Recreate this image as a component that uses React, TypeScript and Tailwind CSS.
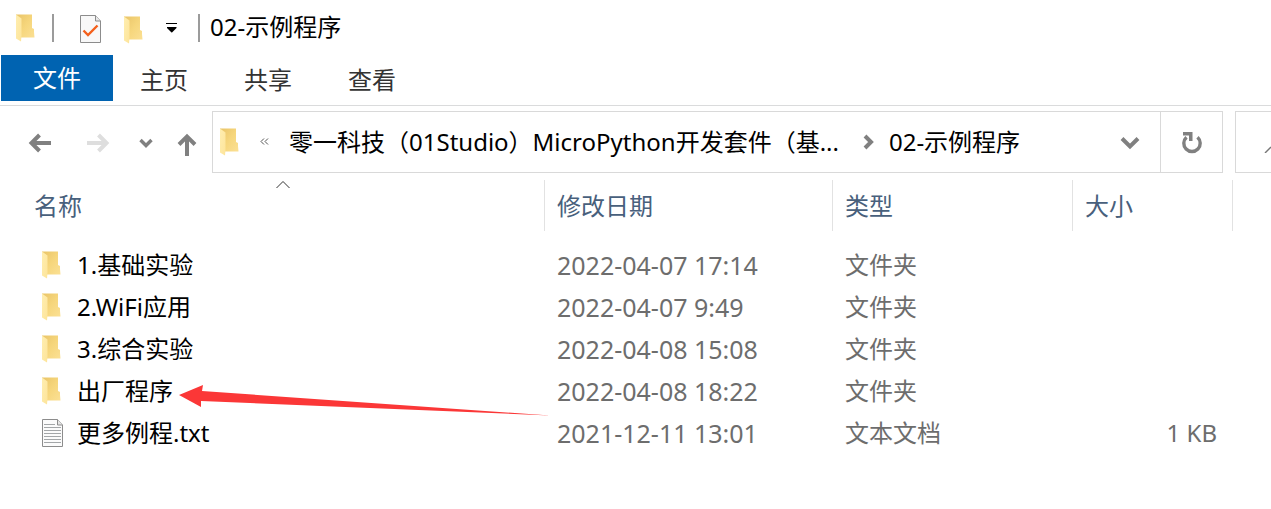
import React from "react";

type Entry = {
  name: string;
  kind: "folder" | "text";
  modified: string;
  type: string;
  size?: string;
  marked?: boolean;
};

const entries: Entry[] = [
  { name: "1.基础实验", kind: "folder", modified: "2022-04-07 17:14", type: "文件夹" },
  { name: "2.WiFi应用", kind: "folder", modified: "2022-04-07 9:49", type: "文件夹" },
  { name: "3.综合实验", kind: "folder", modified: "2022-04-08 15:08", type: "文件夹" },
  { name: "出厂程序", kind: "folder", modified: "2022-04-08 18:22", type: "文件夹", marked: true },
  { name: "更多例程.txt", kind: "text", modified: "2021-12-11 13:01", type: "文本文档", size: "1 KB" },
];

function FolderIcon() {
  return (
    <svg width="19" height="28" viewBox="0 0 19 28" className="shrink-0" aria-hidden="true">
      <defs>
        <linearGradient id="folder-back" x1="0" y1="0" x2="1" y2="1">
          <stop offset="0" stopColor="#e9c468" />
          <stop offset="0.5" stopColor="#f6d67c" />
          <stop offset="1" stopColor="#fbe094" />
        </linearGradient>
        <linearGradient id="folder-front" x1="0" y1="0" x2="1" y2="1">
          <stop offset="0" stopColor="#ffeeb0" />
          <stop offset="1" stopColor="#fde49a" />
        </linearGradient>
      </defs>
      <path d="M0 0.5H16V14L18 15V18L18.5 23.5H5L0 20Z" fill="url(#folder-back)" />
      <path d="M0 0.5L5.5 4.5V21.5L5 27.5L0 24.5Z" fill="url(#folder-front)" />
    </svg>
  );
}

function TextFileIcon() {
  return (
    <svg width="22" height="29" viewBox="0 0 22 29" className="shrink-0" aria-hidden="true">
      <path d="M0.5 0.5H15.5L20.5 6V27.5H0.5Z" fill="#fbfbfb" stroke="#8c8c8c" />
      <path d="M15.5 0.5V6H20.5" fill="#e6e6e6" stroke="#8c8c8c" />
      <path d="M2 5.5H13M2 8.5H19M2 11.5H19M2 14.5H19M2 17.5H19M2 20.5H19M2 23.5H19" stroke="#a3a6a8" />
    </svg>
  );
}

function CheckedPageIcon() {
  return (
    <svg width="21" height="29" viewBox="0 0 21 29" aria-hidden="true">
      <path d="M0.5 0.5H15.5L20.5 6V27.5H0.5Z" fill="#f8f8f8" stroke="#8c8c8c" />
      <path d="M15.5 0.5V6H20.5" fill="#e8e8e8" stroke="#8c8c8c" />
      <path d="M3.5 15.5L8 20L17.5 10.5" fill="none" stroke="#f4601c" strokeWidth="2.4" />
    </svg>
  );
}

function PointerArrow() {
  return (
    <svg
      width="372"
      height="32"
      viewBox="0 0 372 32"
      className="pointer-events-none absolute left-full top-[15px] ml-1.5 max-w-none"
      aria-hidden="true"
    >
      <path d="M0 10L24 0L23 6L371 30.5L22 16L22 22Z" fill="#fb3737" />
    </svg>
  );
}

const thClass = "h-[51px] border-r border-[#e2e2e2] pl-3 text-left font-normal text-[#48607c]";

export default function App() {
  return (
    <div className="min-h-screen overflow-hidden bg-white font-['Noto_Sans','Noto_Sans_CJK_SC',sans-serif] text-2xl leading-[42px] text-black">
      <header className="flex h-[55px] items-center pl-4">
        <FolderIcon />
        <span className="ml-[17px] h-7 w-0.5 bg-[#9b9b9b]" />
        <button type="button" aria-label="属性" className="ml-[26px] pt-1">
          <CheckedPageIcon />
        </button>
        <button type="button" aria-label="新建文件夹" className="ml-[23px] pt-1">
          <FolderIcon />
        </button>
        <button type="button" aria-label="自定义快速访问工具栏" className="ml-[23px]">
          <svg width="12" height="10" viewBox="0 0 12 10" aria-hidden="true">
            <path d="M0 0.5H11" stroke="#000" />
            <path d="M1 4H10.5V5L6 9.5H5.5L1 5Z" fill="#000" />
          </svg>
        </button>
        <span className="ml-5 h-7 w-0.5 bg-[#9b9b9b]" />
        <h1 className="ml-2.5 pb-0.5">02-示例程序</h1>
      </header>

      <nav className="flex h-[51px] items-start border-b border-[#dadbdc] pl-px text-[#333333]">
        <button type="button" className="h-[46px] w-28 bg-[#0063b1] text-white">文件</button>
        <button type="button" className="h-[50px] w-[104px] pr-0.5">主页</button>
        <button type="button" className="h-[50px] w-[104px] pr-0.5">共享</button>
        <button type="button" className="h-[50px] w-[104px] pr-0.5">查看</button>
      </nav>

      <div className="flex items-center pt-[5px]">
        <div className="flex w-[212px] shrink-0 items-center pl-7 pt-0.5 text-[#808080]">
          <button type="button" aria-label="后退">
            <svg width="24" height="20" viewBox="0 0 24 20" fill="none" stroke="currentColor" strokeWidth="4" aria-hidden="true">
              <path d="M23 10H4M11.5 2L3.5 10L11.5 18" />
            </svg>
          </button>
          <button type="button" aria-label="前进" disabled className="ml-[34px] text-[#dedede]">
            <svg width="24" height="20" viewBox="0 0 24 20" fill="none" stroke="currentColor" strokeWidth="4" aria-hidden="true">
              <path d="M1 10H20M12.5 2L20.5 10L12.5 18" />
            </svg>
          </button>
          <button type="button" aria-label="最近浏览的位置" className="ml-[29px]">
            <svg width="14" height="10" viewBox="0 0 14 10" fill="none" stroke="currentColor" strokeWidth="3.4" aria-hidden="true">
              <path d="M1.5 2L7 7.5L12.5 2" />
            </svg>
          </button>
          <button type="button" aria-label="上移" className="ml-6 pt-1">
            <svg width="20" height="24" viewBox="0 0 20 24" fill="none" stroke="currentColor" strokeWidth="4" aria-hidden="true">
              <path d="M10 23V4M2 11.5L10 3.5L18 11.5" />
            </svg>
          </button>
        </div>

        <div className="flex h-[62px] min-w-0 flex-1 items-center border border-[#d9d9d9] pl-[7px]">
          <FolderIcon />
          <svg width="9" height="7" viewBox="0 0 9 7" fill="none" stroke="#555" className="mb-0.5 ml-[21px] shrink-0" aria-hidden="true">
            <path d="M4 0.5L1 3.5L4 6.5M8 0.5L5 3.5L8 6.5" />
          </svg>
          <a href="#parent" className="ml-5 whitespace-nowrap">零一科技（01Studio）MicroPython开发套件（基...</a>
          <svg width="12" height="16" viewBox="0 0 12 16" fill="none" stroke="#808080" strokeWidth="4" className="ml-6 shrink-0" aria-hidden="true">
            <path d="M2 2L8 8L2 14" />
          </svg>
          <a href="#current" className="ml-3.5 whitespace-nowrap">02-示例程序</a>
          <button type="button" aria-label="以前的位置" className="ml-auto mr-5 pt-0.5 text-[#808080]">
            <svg width="20" height="14" viewBox="0 0 20 14" fill="none" stroke="currentColor" strokeWidth="4" aria-hidden="true">
              <path d="M2 2.5L10 10.5L18 2.5" />
            </svg>
          </button>
        </div>
        <button type="button" aria-label="刷新" className="flex h-[62px] w-[62px] shrink-0 items-center justify-center border border-l-0 border-[#d9d9d9]">
          <svg width="22" height="24" viewBox="0 0 22 24" fill="none" aria-hidden="true">
            <path d="M16.5 7.2A8.2 8.2 0 1 1 5.5 7.2" stroke="#808080" strokeWidth="3.4" />
            <path d="M2 2H11.5V11H8V5.5H2Z" fill="#808080" />
          </svg>
        </button>
        <label className="ml-3 flex h-[62px] w-9 shrink-0 items-center border border-r-0 border-[#d9d9d9]">
          <input type="text" aria-label="搜索" className="w-7 outline-none" />
          <svg width="7" height="7" viewBox="0 0 7 7" fill="none" className="mt-3.5 shrink-0" aria-hidden="true">
            <path d="M1 7L7 1" stroke="#777" strokeWidth="1.4" />
          </svg>
        </label>
      </div>

      <main className="pl-[22px] pt-[7px]">
        <table className="w-full table-fixed border-separate border-spacing-0">
          <colgroup>
            <col className="w-[523px]" />
            <col className="w-72" />
            <col className="w-60" />
            <col className="w-40" />
            <col />
          </colgroup>
          <thead>
            <tr>
              <th scope="col" aria-sort="ascending" className={thClass + " relative"}>
                <svg width="14" height="8" viewBox="0 0 14 8" fill="none" stroke="#333" className="absolute left-1/2 top-px -translate-x-1/2" aria-hidden="true">
                  <path d="M0.5 7L7 0.5L13.5 7" />
                </svg>
                名称
              </th>
              <th scope="col" className={thClass}>修改日期</th>
              <th scope="col" className={thClass}>类型</th>
              <th scope="col" className={thClass}>大小</th>
              <td />
            </tr>
          </thead>
          <tbody className="text-[#6d6d6d] before:block before:h-[13px]">
            {entries.map((entry) => (
              <tr key={entry.name}>
                <td className="p-0 pl-5 text-black">
                  <div className="flex h-[42px] items-center">
                    <span className="w-[35px] shrink-0">
                      {entry.kind === "folder" ? <FolderIcon /> : <TextFileIcon />}
                    </span>
                    <span className="relative">
                      {entry.name}
                      {entry.marked && <PointerArrow />}
                    </span>
                  </div>
                </td>
                <td className="p-0 pl-3 text-[25px]">{entry.modified}</td>
                <td className="p-0 pl-3">{entry.type}</td>
                <td className="p-0 pr-4 text-right">{entry.size}</td>
                <td />
              </tr>
            ))}
          </tbody>
        </table>
      </main>
    </div>
  );
}
